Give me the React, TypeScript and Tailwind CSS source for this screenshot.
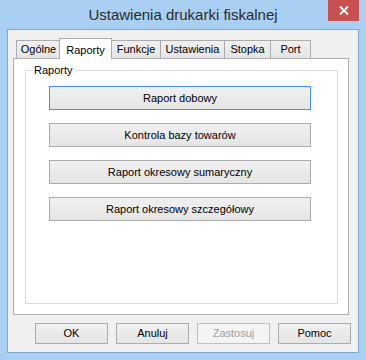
import React from "react"

const tabs = [
  { label: "Ogólne", w: "w-[45px]" },
  { label: "Raporty", w: "w-[53px]", active: true },
  { label: "Funkcje", w: "w-[50px]" },
  { label: "Ustawienia", w: "w-[65px]" },
  { label: "Stopka", w: "w-[47px]" },
  { label: "Port", w: "w-[41px]" },
]

const reports = [
  "Raport dobowy",
  "Kontrola bazy towarów",
  "Raport okresowy sumaryczny",
  "Raport okresowy szczegółowy",
]

function Tab({ label, w, active }: { label: string; w: string; active?: boolean }) {
  if (active) {
    return (
      <div
        className={`${w} relative z-10 -mx-px -mb-px flex h-[21px] items-start justify-center border border-b-0 border-[#acacac] bg-white pt-[3px]`}
      >
        {label}
      </div>
    )
  }
  return (
    <div
      className={`${w} -mr-px flex h-[18px] items-center justify-center border border-b-0 border-[#acacac] bg-gradient-to-b from-[#f0f0f0] to-[#e5e5e5]`}
    >
      {label}
    </div>
  )
}

export default function App() {
  return (
    <div
      className="flex h-[360px] w-[366px] flex-col bg-[#a9cff2] text-[11px] text-black"
      style={{ fontFamily: '"Liberation Sans", Arial, sans-serif' }}
    >
      <div className="relative flex h-[29px] shrink-0 items-center justify-center">
        <span className="mt-[1px] text-[15px] text-[#2b2b2b]">Ustawienia drukarki fiskalnej</span>
        <div className="absolute right-[7px] top-0 flex h-[21px] w-[31px] items-center justify-center bg-[#c75050]">
          <svg width="10" height="9" viewBox="0 0 10 9">
            <path d="M1 0.5 L9 8.5 M9 0.5 L1 8.5" stroke="white" strokeWidth="2" />
          </svg>
        </div>
      </div>

      <div className="mx-[7px] flex h-[324px] flex-col border border-[#83a7cc] bg-[#f0f0f0]">
        <div className="ml-[8px] mt-[7px] flex h-[21px] items-end">
          {tabs.map((t) => (
            <Tab key={t.label} label={t.label} w={t.w} active={t.active} />
          ))}
        </div>

        <div className="ml-[5px] h-[257px] w-[336px] border border-[#acacac] bg-white">
          <div className="relative ml-[11px] mt-[11px] h-[234px] w-[313px] border border-[#dcdcdc]">
            <span className="absolute -top-[8px] left-[6px] bg-white px-[2px] leading-[14px]">Raporty</span>
            <div className="ml-[23px] mt-[15px] flex flex-col gap-[13px]">
              {reports.map((r, i) => (
                <div
                  key={r}
                  className={`flex h-[24px] w-[262px] items-center justify-center border bg-gradient-to-b from-[#f0f0f0] to-[#e5e5e5] ${
                    i === 0 ? "border-[#3c96ee]" : "border-[#acacac]"
                  }`}
                >
                  {r}
                </div>
              ))}
            </div>
          </div>
        </div>

        <div className="ml-[27px] mt-[8px] flex gap-[8px]">
          {["OK", "Anuluj", "Zastosuj", "Pomoc"].map((b) => (
            <div
              key={b}
              className={`flex h-[21px] w-[73px] items-center justify-center border ${
                b === "Zastosuj"
                  ? "border-[#bfbfbf] bg-[#f4f4f4] text-[#a0a0a0]"
                  : "border-[#acacac] bg-gradient-to-b from-[#f0f0f0] to-[#e5e5e5]"
              }`}
            >
              {b}
            </div>
          ))}
        </div>
      </div>
    </div>
  )
}
